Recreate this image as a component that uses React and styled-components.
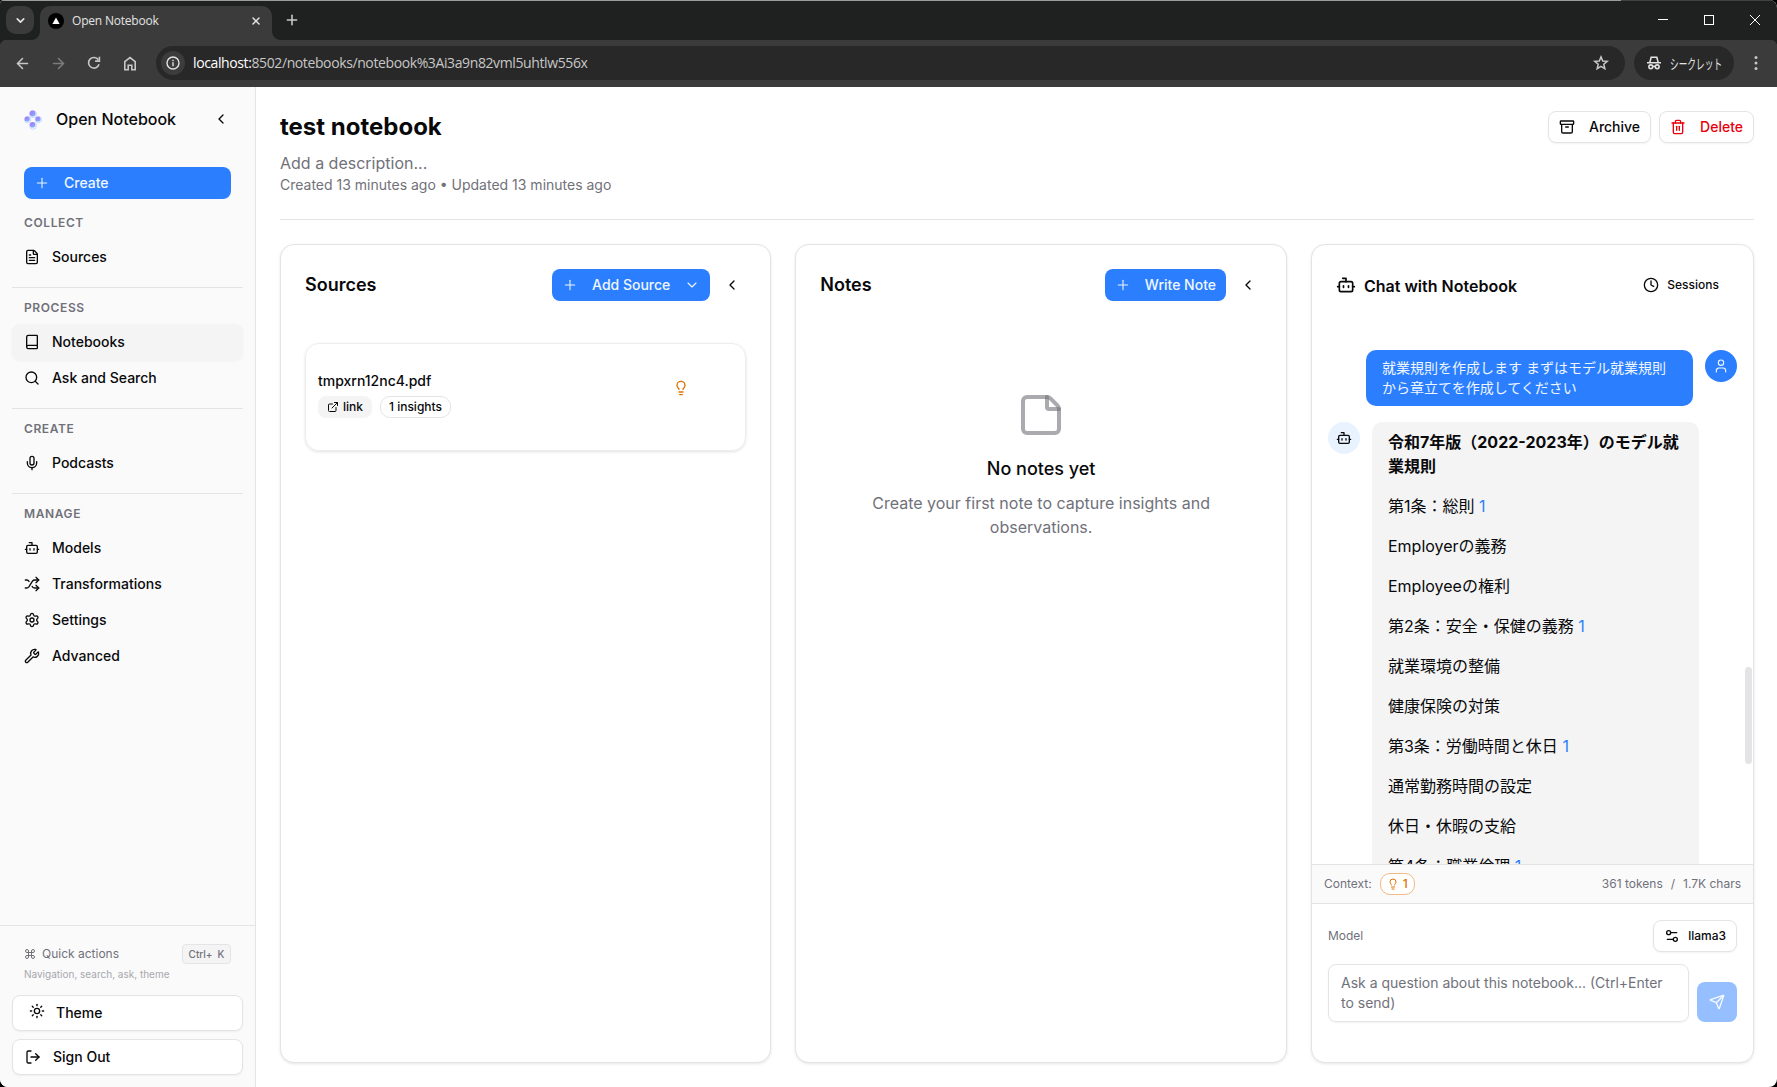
import React from 'react'
import styled, { createGlobalStyle, css } from 'styled-components'
import {
  Archive, ArrowLeft, ArrowRight, Book, Bot, ChevronDown, ChevronLeft, Clock, Command, ExternalLink,
  FileText, Lightbulb, LogOut, Mic, Plus, Search, Send, Settings, Settings2, Shuffle,
  StickyNote, Sun, Trash2, User, Wrench, X,
} from 'lucide-react'

const GlobalStyle = createGlobalStyle`
  * { box-sizing: border-box; }
  body {
    margin: 0;
    background: #000;
    color: #09090b;
    font-family: Inter, "Noto Sans CJK JP", sans-serif;
    overflow: hidden;
  }
  h1, h2, h3, p { margin: 0; }
  button { font-family: inherit; margin: 0; }
  svg { flex-shrink: 0; display: block; }
`

const Window = styled.div`
  width: 1777px;
  height: 1087px;
  display: flex;
  flex-direction: column;
  border-radius: 4px 8px 8px 8px;
  overflow: hidden;
  background: #fff;
`

/* ---------- browser ---------- */

const TabBar = styled.div`
  height: 40px;
  flex-shrink: 0;
  display: flex;
  align-items: flex-start;
  padding: 5px 0 0 6px;
  background: #1f2120;
  border-top: 1px solid;
  border-image: linear-gradient(90deg, #9a9d9b 1620px, #3e4241 1620px) 1;
`

const TabSearch = styled.div`
  width: 28px;
  height: 28px;
  border-radius: 10px;
  background: #3b3b3b;
  color: #e3e3e3;
  display: flex;
  align-items: center;
  justify-content: center;
`

const Tab = styled.div`
  position: relative;
  width: 232px;
  height: 34px;
  margin-left: 6px;
  padding: 0 10px 5px 8px;
  border-radius: 10px 10px 0 0;
  background: #3b3b3b;
  color: #e3e3e3;
  display: flex;
  align-items: center;
  font: 12px "Open Sans", sans-serif;
  letter-spacing: -0.2px;

  &::before, &::after {
    content: '';
    position: absolute;
    bottom: 0;
    width: 8px;
    height: 8px;
  }
  &::before {
    left: -8px;
    background: radial-gradient(circle at 0 0, transparent 7.5px, #3b3b3b 8px);
  }
  &::after {
    right: -8px;
    background: radial-gradient(circle at 100% 0, transparent 7.5px, #3b3b3b 8px);
  }
`

const Favicon = styled.svg`
  margin-right: 8px;
`

const TabTitle = styled.span`
  flex: 1;
  line-height: 16px;
`

const NewTab = styled.div`
  height: 28px;
  margin-left: 12px;
  flex: 1;
  display: flex;
  align-items: center;
  color: #c7c7c7;
`

const WindowControls = styled.div`
  display: flex;
  gap: 36px;
  height: 28px;
  align-items: center;
  padding-right: 17px;
`

const Toolbar = styled.div`
  height: 47px;
  flex-shrink: 0;
  display: flex;
  align-items: center;
  padding: 0 15px 1px 12px;
  background: radial-gradient(circle at 7px 7px, #3b3b3b 7px, #1f2120 7.5px) 0 0 / 7px 7px no-repeat,
    radial-gradient(circle at 0 7px, #3b3b3b 7px, #1f2120 7.5px) 100% 0 / 7px 7px no-repeat, #3b3b3b;
  color: #c7c7c7;
`

const NavIcon = styled.div`
  width: 20px;
  margin-right: 16px;
  display: flex;
  justify-content: center;
  color: ${({ $dim }) => ($dim ? '#7c7c7c' : '#c7c7c7')};
`

const Omnibox = styled.div`
  flex: 1;
  height: 34px;
  border-radius: 17px;
  background: #282828;
  display: flex;
  align-items: center;
  padding: 0 15px 0 5px;
`

const SiteInfo = styled.div`
  width: 24px;
  height: 24px;
  border-radius: 50%;
  background: #3c3c3c;
  display: flex;
  align-items: center;
  justify-content: center;
`

const Url = styled.div`
  flex: 1;
  margin-left: 8px;
  font: 14px/20px "Open Sans", sans-serif;
  letter-spacing: -0.39px;
  color: #c7c7c7;
  span { color: #fff; }
`

const Incognito = styled.div`
  width: 100px;
  height: 34px;
  margin: 0 16px 0 9px;
  border-radius: 17px;
  background: #282828;
  color: #e3e3e3;
  display: flex;
  align-items: center;
  padding-left: 12px;
  gap: 8px;
  font: 14px/16px "Noto Sans CJK JP", sans-serif;
`

/* condensed kana, as the system UI font sets it */
const IncognitoLabel = styled.span`
  width: 54px;
  white-space: nowrap;
  transform: scaleX(0.62);
  transform-origin: 0 50%;
`

/* ---------- app shell ---------- */

const Page = styled.div`
  flex: 1;
  min-height: 0;
  display: flex;
`

const Sidebar = styled.aside`
  width: 256px;
  flex-shrink: 0;
  display: flex;
  flex-direction: column;
  background: #fafafa;
  border-right: 1px solid #e4e4e7;
`

const Brand = styled.div`
  height: 64px;
  padding: 0 26px 0 24px;
  display: flex;
  align-items: center;
  font-size: 16px;
  line-height: 24px;
  font-weight: 500;
`

const LogoMark = styled.svg`
  margin-top: 2px;
`

const BrandName = styled.span`
  flex: 1;
  margin-left: 14px;
`

const Nav = styled.nav`
  flex: 1;
  padding: 16px 12px 0;
`

const PrimaryButton = styled.button`
  height: 32px;
  border: none;
  border-radius: 8px;
  padding: 0 10px;
  display: flex;
  align-items: center;
  background: #2b7fff;
  color: #eff6ff;
  font-size: 14px;
  line-height: 20px;
  font-weight: 500;
  white-space: nowrap;
  svg:first-child { margin-right: 14px; }
  svg + span + svg { margin-left: 14px; }
`

const CreateButton = styled(PrimaryButton)`
  width: 207px;
  margin: 0 12px 16px;
`

const NavSection = styled.div`
  & + & {
    border-top: 1px solid #e4e4e7;
    margin-top: 12px;
    padding-top: 12px;
  }
`

const NavHeading = styled.h3`
  height: 16px;
  line-height: 16px;
  margin: 0 12px 8px;
  font-size: 12px;
  font-weight: 600;
  letter-spacing: 0.6px;
  color: #71717a;
`

const NavItem = styled.div`
  height: 36px;
  padding: 0 12px;
  border-radius: 8px;
  display: flex;
  align-items: center;
  gap: 12px;
  font-size: 14px;
  line-height: 20px;
  font-weight: 500;
  ${({ $active }) => $active && css`
    background: #f4f4f5;
    box-shadow: 0 1px 3px rgba(0, 0, 0, 0.04);
  `}
`

const SidebarFooter = styled.div`
  height: 162px;
  border-top: 1px solid #e4e4e7;
  padding: 18px 12px 0;
`

const QuickActions = styled.div`
  height: 20px;
  padding: 0 12px;
  display: flex;
  align-items: center;
  gap: 6px;
  font-size: 12px;
  line-height: 16px;
  color: #71717a;
  > span { flex: 1; }
`

const Kbd = styled.kbd`
  width: 49px;
  height: 20px;
  border: 1px solid #e4e4e7;
  border-radius: 4px;
  background: #f4f4f5;
  display: flex;
  align-items: center;
  justify-content: center;
  gap: 5px;
  font: 500 10px/14px Inter, sans-serif;
`

const QuickHint = styled.div`
  margin: 3px 12px 13px;
  height: 15px;
  line-height: 15px;
  font-size: 10px;
  color: #a7a7ad;
`

const FooterButton = styled.button`
  width: 100%;
  height: 36px;
  margin-bottom: 8px;
  padding-left: ${({ $inset }) => $inset || 12}px;
  border: 1px solid #e4e4e7;
  border-radius: 8px;
  background: #fff;
  color: #09090b;
  box-shadow: 0 1px 2px rgba(0, 0, 0, 0.05);
  display: flex;
  align-items: center;
  gap: ${({ $inset }) => ($inset ? 11 : 12)}px;
  font-size: 14px;
  line-height: 20px;
  font-weight: 500;
`

const ThemeIcon = styled.span`
  padding-bottom: 4px;
`

/* ---------- main ---------- */

const Main = styled.main`
  flex: 1;
  min-width: 0;
  padding: 24px 23px 24px 24px;
  display: flex;
  flex-direction: column;
`

const PageHeader = styled.header`
  height: 109px;
  border-bottom: 1px solid #e4e4e7;
  margin-bottom: 24px;
  display: flex;
  justify-content: space-between;
`

const Title = styled.h1`
  height: 32px;
  line-height: 32px;
  font-size: 24px;
  font-weight: 700;
`

const Description = styled.p`
  margin-top: 8px;
  line-height: 24px;
  font-size: 16px;
  color: #71717a;
`

const Meta = styled.p`
  line-height: 20px;
  font-size: 14px;
  color: #71717a;
`

const HeaderActions = styled.div`
  display: flex;
  gap: 8px;
`

const OutlineButton = styled.button`
  height: 32px;
  padding: 0 10px;
  border: 1px solid #e4e4e7;
  border-radius: 8px;
  background: #fff;
  box-shadow: 0 1px 2px rgba(0, 0, 0, 0.05);
  color: ${({ $danger }) => ($danger ? '#e7000b' : '#09090b')};
  display: flex;
  align-items: center;
  gap: ${({ $small }) => ($small ? 8 : 14)}px;
  font-size: ${({ $small }) => ($small ? 12 : 14)}px;
  line-height: ${({ $small }) => ($small ? 16 : 20)}px;
  font-weight: 500;
`

const Columns = styled.div`
  flex: 1;
  min-height: 0;
  display: grid;
  grid-template-columns: 491.3px 491.7px 443px;
  gap: 24px;
`

const Card = styled.section`
  min-height: 0;
  border: 1px solid #e4e4e7;
  border-radius: 14px;
  background: #fff;
  box-shadow: 0 1px 3px rgba(0, 0, 0, 0.1);
  display: flex;
  flex-direction: column;
  overflow: hidden;
`

const CardHeader = styled.div`
  height: 32px;
  margin: 24px 24px 0;
  display: flex;
  align-items: center;
`

const CardTitle = styled.h2`
  flex: 1;
  font-size: 18px;
  line-height: 28px;
  font-weight: 600;
`

const ChatTitle = styled(CardTitle)`
  margin-left: 8px;
  padding-top: 1px;
  font-size: 16px;
  line-height: 24px;
`

const CollapseButton = styled.div`
  width: 32px;
  margin: 0 -2px 0 6px;
  display: flex;
  justify-content: center;
`

const SourceCard = styled.div`
  height: 108px;
  margin: 42px 24px 0;
  padding: 0 56px 0 12px;
  border: 1px solid #ededef;
  border-radius: 14px;
  box-shadow: 0 1px 3px rgba(0, 0, 0, 0.12);
  display: flex;
  justify-content: space-between;
`

const SourceName = styled.div`
  margin-top: 27px;
  line-height: 20px;
  font-size: 14px;
  font-weight: 500;
`

const Badges = styled.div`
  display: flex;
  gap: 8px;
  margin-top: 5px;
`

const Badge = styled.span`
  height: 22px;
  padding: 0 8px;
  border: 1px solid ${({ $filled }) => ($filled ? '#f4f4f5' : '#e4e4e7')};
  border-radius: ${({ $filled }) => ($filled ? 8 : 10)}px;
  background: ${({ $filled }) => ($filled ? '#f4f4f5' : '#fff')};
  display: flex;
  align-items: center;
  gap: 4px;
  font-size: 12px;
  line-height: 16px;
  font-weight: 500;
`

const InsightIcon = styled.div`
  margin-top: 36px;
  color: #e17100;
`

const EmptyState = styled.div`
  margin-top: 90px;
  padding: 0 56px;
  display: flex;
  flex-direction: column;
  align-items: center;
  text-align: center;
  font-size: 16px;
  line-height: 24px;
  color: #71717a;
  svg { color: rgba(113, 113, 122, 0.6); }
  h3 {
    margin: 16px 0 8px;
    line-height: 28px;
    font-size: 18px;
    font-weight: 500;
    color: #09090b;
  }
`

/* ---------- chat ---------- */

const Sessions = styled.div`
  display: flex;
  align-items: center;
  gap: 8px;
  margin-right: 10px;
  font-size: 12px;
  line-height: 16px;
  font-weight: 500;
`

const Messages = styled.div`
  position: relative;
  flex: 1;
  min-height: 0;
  margin-top: 32px;
  padding: 17px 16px 0 16px;
  display: flex;
  flex-direction: column;
  gap: 16px;
  overflow: hidden;
`

const Message = styled.div`
  display: flex;
  align-items: flex-start;
  flex-shrink: 0;
  gap: 12px;
  justify-content: ${({ $own }) => ($own ? 'flex-end' : 'flex-start')};
`

const Avatar = styled.div`
  width: 32px;
  height: 32px;
  border-radius: 50%;
  background: ${({ $own }) => ($own ? '#2b7fff' : '#e9f2ff')};
  color: ${({ $own }) => ($own ? '#eff6ff' : '#09090b')};
  display: flex;
  align-items: center;
  justify-content: center;
`

const UserBubble = styled.div`
  width: 327px;
  padding: 8px 16px;
  border-radius: 10px;
  background: #2b7fff;
  color: #eff6ff;
  font-size: 14px;
  line-height: 20px;
`

const BotBubble = styled.div`
  width: 327px;
  padding: 8px 16px;
  border-radius: 10px;
  background: #f4f4f5;
  font-size: 16px;
  line-height: 24px;
  h3 {
    font-size: 16px;
    font-weight: 700;
  }
  p { margin-top: 16px; }
  a { color: #2b7fff; }
`

const ScrollThumb = styled.div`
  position: absolute;
  top: 334px;
  right: 1px;
  width: 7px;
  height: 97px;
  border-radius: 4px;
  background: #e4e4e7;
`

const ContextBar = styled.div`
  height: 40px;
  flex-shrink: 0;
  padding: 0 12px;
  border-top: 1px solid #e4e4e7;
  border-bottom: 1px solid #e4e4e7;
  background: #fafafa;
  display: flex;
  align-items: center;
  gap: 8px;
  font-size: 12px;
  line-height: 16px;
  color: #71717a;
`

const ContextBadge = styled(Badge)`
  width: 35px;
  padding: 0 5px 0 6px;
  border-color: #f0b985;
  color: #e17100;
`

const Usage = styled.div`
  margin-left: auto;
  display: flex;
  gap: 8px;
`

const ChatFooter = styled.div`
  height: 158px;
  flex-shrink: 0;
  padding: 16px 16px 0 16px;
`

const ModelRow = styled.div`
  display: flex;
  align-items: center;
  justify-content: space-between;
  font-size: 12px;
  line-height: 16px;
  color: #71717a;
`

const InputRow = styled.div`
  margin-top: 12px;
  display: flex;
  align-items: flex-end;
  gap: 8px;
`

const Prompt = styled.div`
  flex: 1;
  height: 58px;
  padding: 8px 12px;
  border: 1px solid #e4e4e7;
  border-radius: 8px;
  box-shadow: 0 1px 2px rgba(0, 0, 0, 0.05);
  font-size: 14px;
  line-height: 20px;
  color: #71717a;
`

const SendButton = styled.button`
  width: 40px;
  height: 40px;
  padding: 0;
  border: none;
  border-radius: 8px;
  background: #95bfff;
  color: #f7faff;
  display: flex;
  align-items: center;
  justify-content: center;
`

const navSections = [
  { heading: 'COLLECT', items: [{ label: 'Sources', icon: FileText }] },
  {
    heading: 'PROCESS',
    items: [
      { label: 'Notebooks', icon: Book, active: true },
      { label: 'Ask and Search', icon: Search },
    ],
  },
  { heading: 'CREATE', items: [{ label: 'Podcasts', icon: Mic }] },
  {
    heading: 'MANAGE',
    items: [
      { label: 'Models', icon: Bot },
      { label: 'Transformations', icon: Shuffle },
      { label: 'Settings', icon: Settings },
      { label: 'Advanced', icon: Wrench },
    ],
  },
]

const answer = [
  { text: '第1条：総則', ref: 1 },
  { text: 'Employerの義務' },
  { text: 'Employeeの権利' },
  { text: '第2条：安全・保健の義務', ref: 1 },
  { text: '就業環境の整備' },
  { text: '健康保険の対策' },
  { text: '第3条：労働時間と休日', ref: 1 },
  { text: '通常勤務時間の設定' },
  { text: '休日・休暇の支給' },
  { text: '第4条：職業倫理', ref: 1 },
]

const Logo = () => (
  <LogoMark width="18" height="20" viewBox="0 0 18 20">
    <defs>
      <linearGradient id="dot" x1="0" y1="0" x2="0.8" y2="1">
        <stop offset="0" stopColor="#b56cf8" />
        <stop offset="1" stopColor="#7cb4ff" />
      </linearGradient>
    </defs>
    <g fill="none" stroke="#bcd4ff" strokeWidth="0.8">
      <circle cx="9" cy="4.2" r="3.5" />
      <circle cx="3.6" cy="9.6" r="3.2" />
      <circle cx="14.4" cy="9.6" r="3.2" />
      <circle cx="9" cy="15.8" r="3.5" />
    </g>
    <g fill="url(#dot)">
      <circle cx="8.6" cy="3.4" r="3" />
      <circle cx="3.2" cy="9" r="2.6" />
      <circle cx="14" cy="9" r="2.6" />
      <circle cx="8.6" cy="14.8" r="2.8" />
    </g>
  </LogoMark>
)

const Browser = () => (
  <>
    <TabBar>
      <TabSearch><ChevronDown size={13} strokeWidth={3} /></TabSearch>
      <Tab>
        <Favicon width="16" height="16" viewBox="0 0 16 16">
          <circle cx="8" cy="8" r="8" fill="#000" />
          <path d="M8 4.4 11.6 11H4.4z" fill="#fff" />
        </Favicon>
        <TabTitle>Open Notebook</TabTitle>
        <X size={12} strokeWidth={3} />
      </Tab>
      <NewTab><Plus size={16} strokeWidth={2.4} /></NewTab>
      <WindowControls>
        <svg width="10" height="10"><path d="M0 4.5h10" stroke="#fff" /></svg>
        <svg width="10" height="10"><rect x="0.5" y="0.5" width="9" height="9" fill="none" stroke="#fff" /></svg>
        <svg width="10" height="10"><path d="M0 0l10 10M10 0L0 10" stroke="#fff" /></svg>
      </WindowControls>
    </TabBar>
    <Toolbar>
      <NavIcon><ArrowLeft size={17} strokeWidth={2.2} /></NavIcon>
      <NavIcon $dim><ArrowRight size={17} strokeWidth={2.2} /></NavIcon>
      <NavIcon>
        <svg width="14" height="14" viewBox="0 0 14 14" fill="none" stroke="currentColor" strokeWidth="1.6">
          <path d="M12 8.2A5.3 5.3 0 1 1 11.3 3.8" />
          <path d="M12.4 0.8v4.3H8.1" />
        </svg>
      </NavIcon>
      <NavIcon>
        <svg width="14" height="15" viewBox="0 0 14 15" fill="none" stroke="currentColor" strokeWidth="1.6">
          <path d="M1.8 5.6 7 1.5l5.2 4.1v8.1H8.8V9.2H5.2v4.5H1.8z" />
        </svg>
      </NavIcon>
      <Omnibox>
        <SiteInfo>
          <svg width="14" height="14" viewBox="0 0 14 14" fill="none" stroke="#e3e3e3" strokeWidth="1.4">
            <circle cx="7" cy="7" r="6" />
            <path d="M7 6.3v3.9M7 3.8v1.4" />
          </svg>
        </SiteInfo>
        <Url><span>localhost:</span>8502/notebooks/notebook%3Ai3a9n82vml5uhtlw556x</Url>
        <svg width="18" height="18" viewBox="0 0 24 24" fill="none" stroke="currentColor" strokeWidth="2">
          <path d="M12 3.8l2.3 5.5 6 .5-4.6 3.9 1.4 5.8-5.1-3.1-5.1 3.1 1.4-5.8-4.6-3.9 6-.5z" />
        </svg>
      </Omnibox>
      <Incognito>
        <svg width="16" height="16" viewBox="0 0 16 16" fill="none" stroke="currentColor" strokeWidth="1.6">
          <path d="M1 7.7h14" />
          <path d="M3.8 7.4 5.2 2.2h5.6l1.4 5.2" />
          <circle cx="4.8" cy="11.8" r="1.9" />
          <circle cx="11.2" cy="11.8" r="1.9" />
          <path d="M6.5 11.6q1.5-.8 3 0" />
        </svg>
        <IncognitoLabel>シークレット</IncognitoLabel>
      </Incognito>
      <svg width="12" height="16" viewBox="0 0 12 16" fill="currentColor">
        <circle cx="6" cy="2.5" r="1.5" />
        <circle cx="6" cy="8" r="1.5" />
        <circle cx="6" cy="13.5" r="1.5" />
      </svg>
    </Toolbar>
  </>
)

const SideNav = () => (
  <Sidebar>
    <Brand>
      <Logo />
      <BrandName>Open Notebook</BrandName>
      <ChevronLeft size={16} />
    </Brand>
    <Nav>
      <CreateButton><Plus size={16} strokeWidth={1.6} /><span>Create</span></CreateButton>
      {navSections.map((section) => (
        <NavSection key={section.heading}>
          <NavHeading>{section.heading}</NavHeading>
          {section.items.map(({ label, icon: Icon, active }) => (
            <NavItem key={label} $active={active}>
              <Icon size={16} />
              {label}
            </NavItem>
          ))}
        </NavSection>
      ))}
    </Nav>
    <SidebarFooter>
      <QuickActions>
        <Command size={12} />
        <span>Quick actions</span>
        <Kbd><span>Ctrl+</span><span>K</span></Kbd>
      </QuickActions>
      <QuickHint>Navigation, search, ask, theme</QuickHint>
      <FooterButton $inset={16}>
        <ThemeIcon><Sun size={16} /></ThemeIcon>
        Theme
      </FooterButton>
      <FooterButton><LogOut size={16} />Sign Out</FooterButton>
    </SidebarFooter>
  </Sidebar>
)

const SourcesCard = () => (
  <Card>
    <CardHeader>
      <CardTitle>Sources</CardTitle>
      <PrimaryButton>
        <Plus size={16} strokeWidth={1.6} />
        <span>Add Source</span>
        <ChevronDown size={16} strokeWidth={1.6} />
      </PrimaryButton>
      <CollapseButton><ChevronLeft size={16} /></CollapseButton>
    </CardHeader>
    <SourceCard>
      <div>
        <SourceName>tmpxrn12nc4.pdf</SourceName>
        <Badges>
          <Badge $filled><ExternalLink size={12} />link</Badge>
          <Badge>1 insights</Badge>
        </Badges>
      </div>
      <InsightIcon><Lightbulb size={16} /></InsightIcon>
    </SourceCard>
  </Card>
)

const NotesCard = () => (
  <Card>
    <CardHeader>
      <CardTitle>Notes</CardTitle>
      <PrimaryButton><Plus size={16} strokeWidth={1.6} /><span>Write Note</span></PrimaryButton>
      <CollapseButton><ChevronLeft size={16} /></CollapseButton>
    </CardHeader>
    <EmptyState>
      <StickyNote size={48} />
      <h3>No notes yet</h3>
      <p>Create your first note to capture insights and observations.</p>
    </EmptyState>
  </Card>
)

const ChatCard = () => (
  <Card>
    <CardHeader>
      <Bot size={20} />
      <ChatTitle>Chat with Notebook</ChatTitle>
      <Sessions><Clock size={16} />Sessions</Sessions>
    </CardHeader>
    <Messages>
      <Message $own>
        <UserBubble>就業規則を作成します まずはモデル就業規則から章立てを作成してください</UserBubble>
        <Avatar $own><User size={16} strokeWidth={1.7} /></Avatar>
      </Message>
      <Message>
        <Avatar><Bot size={16} /></Avatar>
        <BotBubble>
          <h3>令和7年版（2022-2023年）のモデル就業規則</h3>
          {answer.map(({ text, ref }) => (
            <p key={text}>{text} {ref && <a>{ref}</a>}</p>
          ))}
        </BotBubble>
      </Message>
      <ScrollThumb />
    </Messages>
    <ContextBar>
      Context:
      <ContextBadge><Lightbulb size={12} />1</ContextBadge>
      <Usage><span>361 tokens</span><span>/</span><span>1.7K chars</span></Usage>
    </ContextBar>
    <ChatFooter>
      <ModelRow>
        Model
        <OutlineButton $small><Settings2 size={16} />llama3</OutlineButton>
      </ModelRow>
      <InputRow>
        <Prompt>Ask a question about this notebook... (Ctrl+Enter to send)</Prompt>
        <SendButton><Send size={16} /></SendButton>
      </InputRow>
    </ChatFooter>
  </Card>
)

const App = () => {
  return (
    <Window>
      <GlobalStyle />
      <Browser />
      <Page>
        <SideNav />
        <Main>
          <PageHeader>
            <div>
              <Title>test notebook</Title>
              <Description>Add a description...</Description>
              <Meta>Created 13 minutes ago • Updated 13 minutes ago</Meta>
            </div>
            <HeaderActions>
              <OutlineButton><Archive size={16} />Archive</OutlineButton>
              <OutlineButton $danger><Trash2 size={16} />Delete</OutlineButton>
            </HeaderActions>
          </PageHeader>
          <Columns>
            <SourcesCard />
            <NotesCard />
            <ChatCard />
          </Columns>
        </Main>
      </Page>
    </Window>
  )
}

export default App
